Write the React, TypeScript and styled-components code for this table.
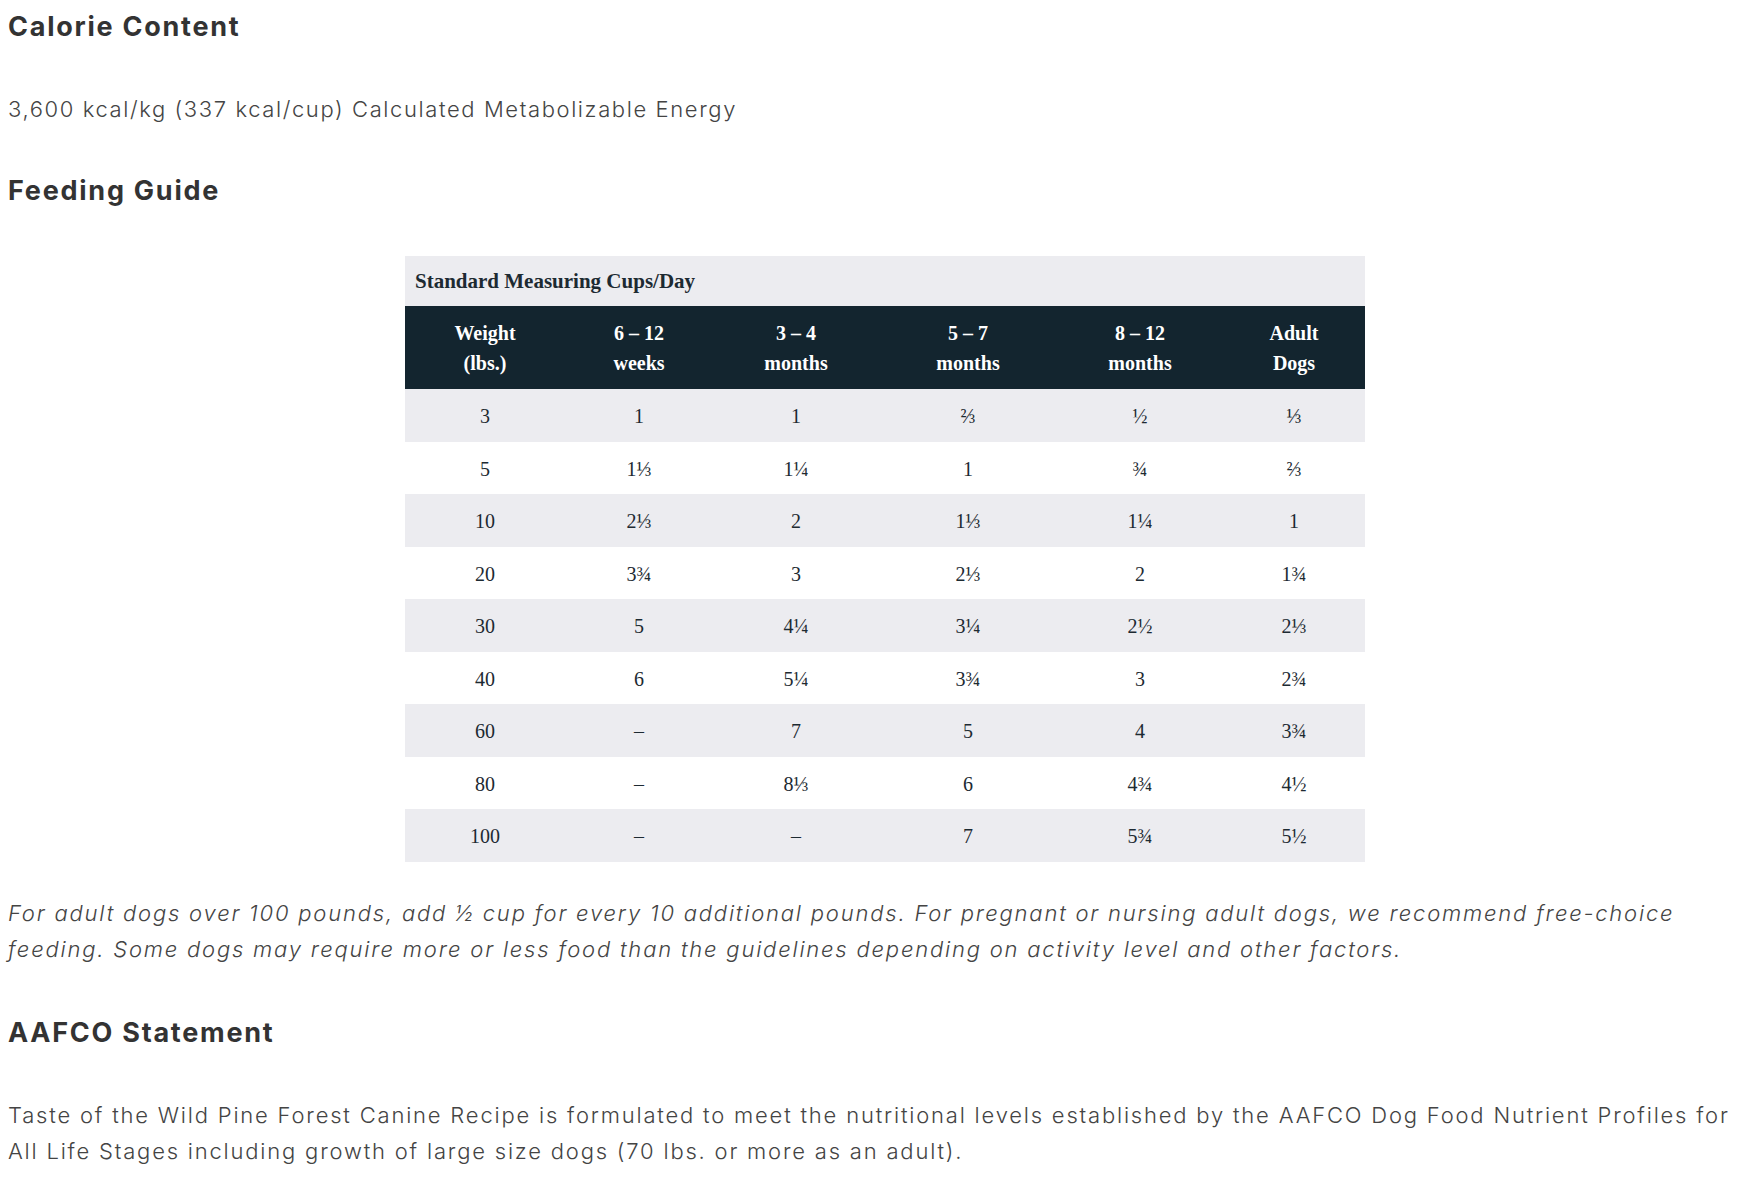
import React from "react";
import styled, { createGlobalStyle } from "styled-components";

const GlobalStyle = createGlobalStyle`
  html, body {
    margin: 0;
    padding: 0;
    background: #ffffff;
  }
  body {
    font-family: Inter, "Liberation Sans", sans-serif;
  }
`;

const Page = styled.main`
  padding: 9px 8px 0 8px;
  color: #444444;
`;

const Heading = styled.h2<{ $top: number }>`
  margin: ${(p) => p.$top}px 0 0;
  font-family: Inter, "Liberation Sans", sans-serif;
  font-weight: 700;
  font-size: 27px;
  line-height: 36px;
  letter-spacing: 1.75px;
  color: #333333;
`;

const Text = styled.p<{ $top: number; $italic?: boolean; $spacing?: number }>`
  margin: ${(p) => p.$top}px 0 0;
  font-family: Inter, "Liberation Sans", sans-serif;
  font-size: 22px;
  line-height: 36px;
  font-weight: 300;
  letter-spacing: ${(p) => p.$spacing ?? 1.8}px;
  color: #444444;
  font-style: ${(p) => (p.$italic ? "italic" : "normal")};
  white-space: nowrap;
`;

const COLS = "160px 148px 166px 178px 166px 142px";

const Chart = styled.figure`
  margin: 47px 0 0 397px;
  width: 960px;
  font-family: "Liberation Serif", "DejaVu Serif", serif;
`;

const Caption = styled.div`
  height: 50px;
  line-height: 50px;
  padding-left: 10px;
  background: #ececf0;
  font-weight: 700;
  font-size: 21px;
  color: #1d2a32;
`;

const HeadRow = styled.div`
  display: grid;
  grid-template-columns: ${COLS};
  background: #13252f;
  color: #ffffff;
  padding: 12px 0 11px;
  font-weight: 700;
  font-size: 20px;
  line-height: 30px;
  text-align: center;
`;

const Row = styled.div<{ $shade: boolean }>`
  display: grid;
  grid-template-columns: ${COLS};
  height: 52.55px;
  line-height: 54px;
  background: ${(p) => (p.$shade ? "#ececf0" : "#ffffff")};
  font-size: 20px;
  color: #1d2a32;
  text-align: center;
`;

const Cell = styled.span`
  display: block;
`;

const headers: [string, string][] = [
  ["Weight", "(lbs.)"],
  ["6 – 12", "weeks"],
  ["3 – 4", "months"],
  ["5 – 7", "months"],
  ["8 – 12", "months"],
  ["Adult", "Dogs"],
];

const rows: string[][] = [
  ["3", "1", "1", "⅔", "½", "⅓"],
  ["5", "1⅓", "1¼", "1", "¾", "⅔"],
  ["10", "2⅓", "2", "1⅓", "1¼", "1"],
  ["20", "3¾", "3", "2⅓", "2", "1¾"],
  ["30", "5", "4¼", "3¼", "2½", "2⅓"],
  ["40", "6", "5¼", "3¾", "3", "2¾"],
  ["60", "–", "7", "5", "4", "3¾"],
  ["80", "–", "8⅓", "6", "4¾", "4½"],
  ["100", "–", "–", "7", "5¾", "5½"],
];

export default function App() {
  return (
    <>
      <GlobalStyle />
      <Page>
        <Heading $top={0}>Calorie Content</Heading>
        <Text $top={46} $spacing={1.6}>
          3,600 kcal/kg (337 kcal/cup) Calculated Metabolizable Energy
        </Text>
        <Heading $top={46}>Feeding Guide</Heading>
        <Chart>
          <Caption>Standard Measuring Cups/Day</Caption>
          <HeadRow>
            {headers.map(([a, b]) => (
              <Cell key={a + b}>
                {a}
                <br />
                {b}
              </Cell>
            ))}
          </HeadRow>
          {rows.map((r, i) => (
            <Row key={r[0]} $shade={i % 2 === 0}>
              {r.map((v, j) => (
                <Cell key={j}>{v}</Cell>
              ))}
            </Row>
          ))}
        </Chart>
        <Text $top={33} $italic $spacing={1.8}>
          For adult dogs over 100 pounds, add ½ cup for every 10 additional pounds. For pregnant or nursing adult dogs, we recommend free-choice
          <br />
          feeding. Some dogs may require more or less food than the guidelines depending on activity level and other factors.
        </Text>
        <Heading $top={48}>AAFCO Statement</Heading>
        <Text $top={46} $spacing={1.8}>
          Taste of the Wild Pine Forest Canine Recipe is formulated to meet the nutritional levels established by the AAFCO Dog Food Nutrient Profiles for
          <br />
          All Life Stages including growth of large size dogs (70 lbs. or more as an adult).
        </Text>
      </Page>
    </>
  );
}
